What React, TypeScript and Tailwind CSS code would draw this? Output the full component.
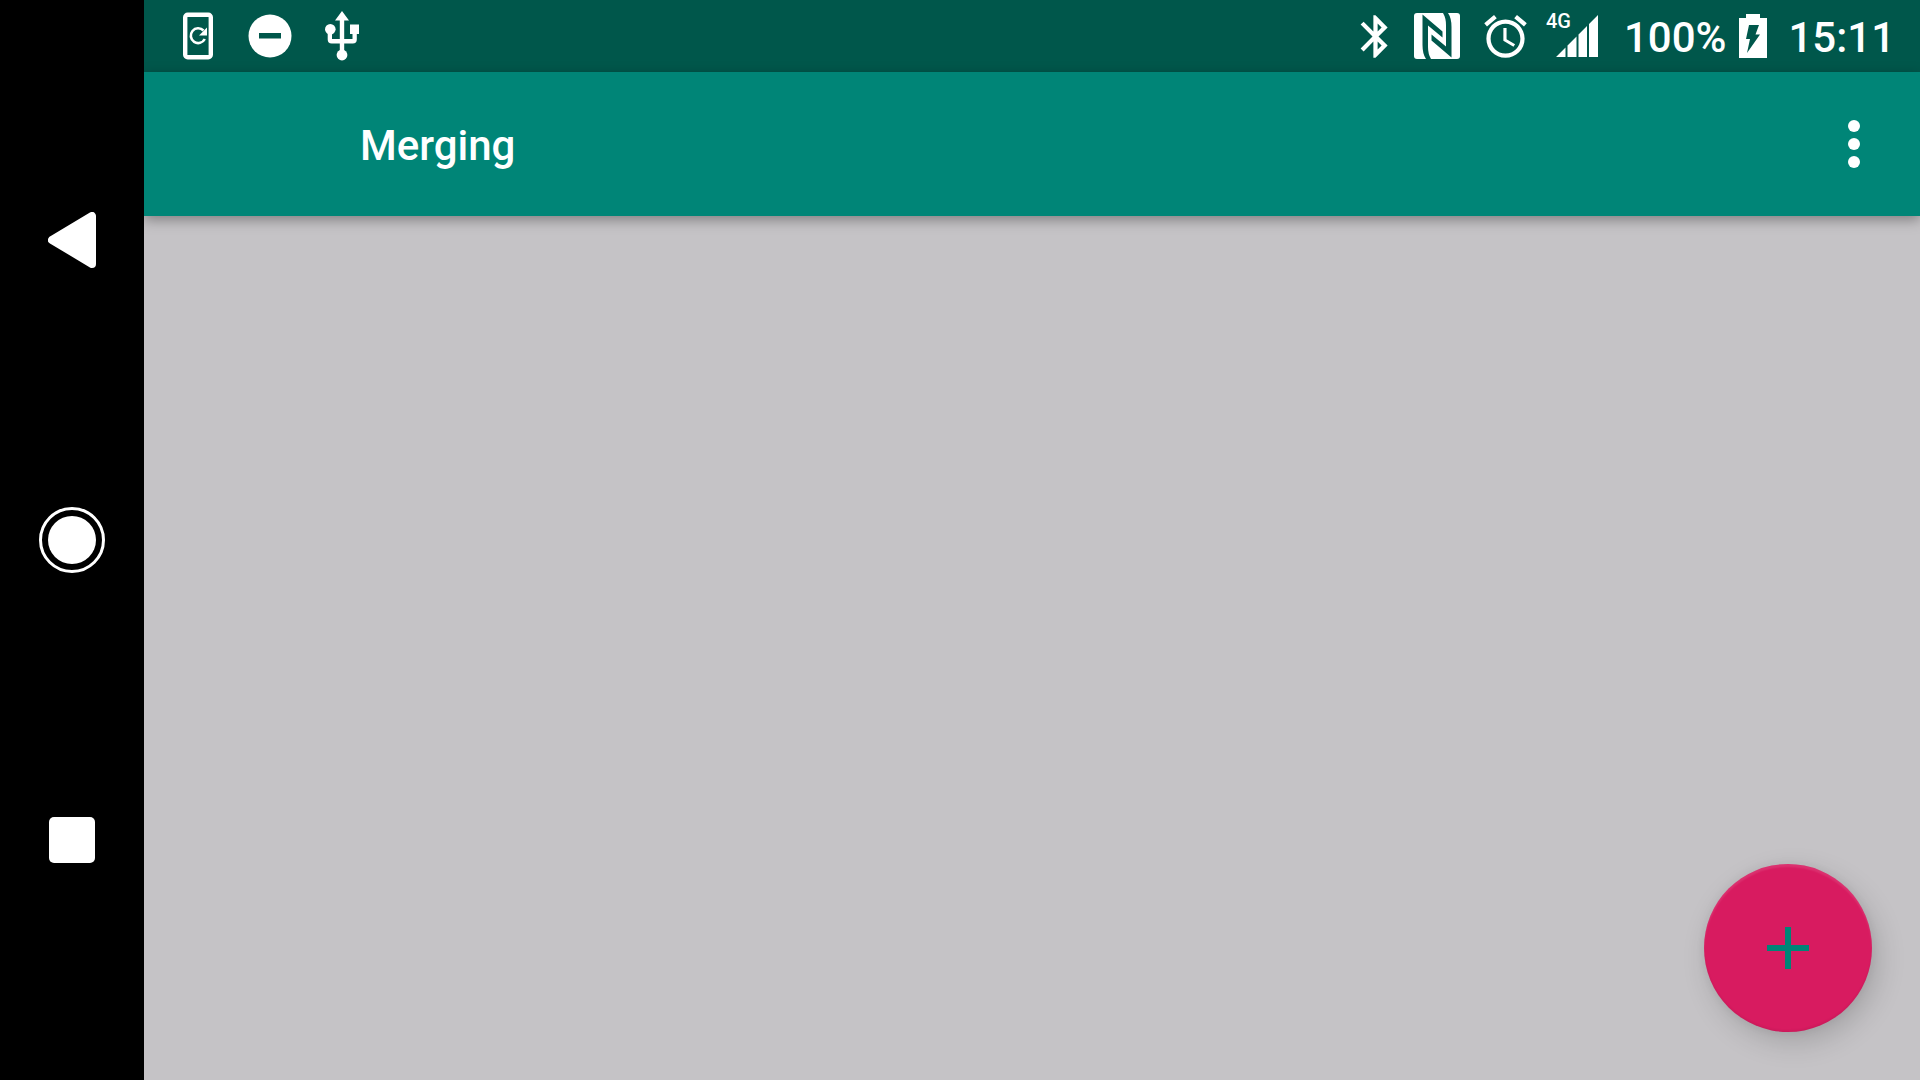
import type { ReactNode } from "react";

function Slot({ children }: { children: ReactNode }) {
  return <span className="flex w-[72px] justify-center">{children}</span>;
}

function StatusBar() {
  return (
    <header className="flex h-[72px] shrink-0 items-center justify-between bg-[#00574b] pr-[25px] pl-[18px] text-white">
      <div className="flex items-center">
        <Slot>
          <svg width="30" height="48" viewBox="0 0 30 48" fill="none" stroke="white" aria-label="Phone update">
            <rect x="2.200" y="2.700" width="25.600" height="42.600" rx="2.500" strokeWidth="4.400" />
            <path d="M20.500 18.500A7.400 7.400 0 1 0 21.800 27" strokeWidth="2.600" />
            <path d="M24 15.500v8h-8z" fill="white" stroke="none" />
          </svg>
        </Slot>
        <Slot>
          <svg width="44" height="44" viewBox="0 0 44 44" aria-label="Do not disturb">
            <circle cx="22" cy="22" r="21.500" fill="white" />
            <path d="M11 19h22v5.500H11z" fill="#00574b" />
          </svg>
        </Slot>
        <Slot>
          <svg width="34" height="50" viewBox="0 0 34 50" fill="white" aria-label="USB">
            <path d="M17 0L24 9.500H19.200V28H27.500V23H25V13.500H34V23H31.800V28.500Q31.800 32.500 27.800 32.500H19.200V40H14.800V32.500H6.700Q2.700 32.500 2.700 28.500V21H7V28H14.800V9.500H10z" />
            <circle cx="5.300" cy="18.300" r="5.300" />
            <circle cx="17" cy="44" r="5.400" />
          </svg>
        </Slot>
      </div>
      <div className="flex items-center">
        <svg width="51" height="51" viewBox="0 0 24 24" fill="white" aria-label="Bluetooth">
          <path d="M17.710 7.710L12 2h-1v7.590L6.410 5 5 6.410 10.590 12 5 17.590 6.410 19 11 14.410V22h1l5.710-5.710-4.300-4.290 4.300-4.290zM13 5.830l1.880 1.880L13 9.590V5.830zm1.880 10.460L13 18.170v-3.760l1.880 1.880z" />
        </svg>
        <svg className="ml-[13px]" width="46" height="46" viewBox="0 0 46 46" aria-label="NFC">
          <rect width="46" height="46" rx="3" fill="white" />
          <g fill="#00574b">
            <path d="M8.500 1.500L28.500 18.500V24.500L14 12.500V34Q14 41 17 46H12Q8.500 41 8.500 32z" />
            <path d="M37.500 44.500L17.500 27.500V21.500L32 33.500V12Q32 5 29 0H34Q37.500 5 37.500 14z" />
          </g>
        </svg>
        <svg className="ml-5" width="51" height="51" viewBox="0 0 24 24" fill="white" aria-label="Alarm">
          <path d="M22 5.720l-4.600-3.860-1.290 1.530 4.600 3.860L22 5.720zM7.880 3.390L6.600 1.860 2 5.710l1.290 1.530 4.590-3.850zM12.500 8H11v6l4.750 2.850.750-1.230-4-2.370V8zM12 4c-4.970 0-9 4.030-9 9s4.020 9 9 9c4.970 0 9-4.030 9-9s-4.030-9-9-9zm0 16c-3.870 0-7-3.130-7-7s3.130-7 7-7 7 3.130 7 7-3.130 7-7 7z" />
        </svg>
        <div className="relative ml-[25px]">
          <svg width="42" height="42" viewBox="0 0 42 42" fill="white" aria-label="Mobile signal">
            <path d="M0 42L9.500 32.500V42zM11.500 30.500L20.500 21.500V42H11.500zM22.500 19.500L31 11V42H22.500zM33 9L42 0V42H33z" />
          </svg>
          <span className="absolute -top-1.5 -left-2.5 text-[20px] leading-6 font-medium">4G</span>
        </div>
        <span className="ml-[26px] pt-1 text-[42px] leading-[48px] font-medium">100%</span>
        <svg className="ml-[13px]" width="28" height="44" viewBox="0 0 28 44" aria-label="Battery charging">
          <path d="M7 0h14v4h7v40H0V4h7z" fill="white" />
          <path d="M10 11h10l-3.500 9.500H21L8 39l3-14H7z" fill="#00574b" />
        </svg>
        <time className="ml-[21px] pt-1 text-[42px] leading-[48px] font-medium">15:11</time>
      </div>
    </header>
  );
}

function NavigationBar() {
  return (
    <nav className="flex w-[144px] shrink-0 flex-col bg-black py-[90px]">
      <button aria-label="Back" className="flex flex-1 items-center justify-center">
        <svg width="48" height="56" viewBox="0 0 48 56" fill="white" stroke="white" strokeWidth="8" strokeLinejoin="round">
          <path d="M4 28L44 4V52z" />
        </svg>
      </button>
      <button aria-label="Home" className="flex flex-1 items-center justify-center">
        <svg width="66" height="66" viewBox="0 0 66 66">
          <circle cx="33" cy="33" r="31.500" fill="none" stroke="white" strokeWidth="3" />
          <circle cx="33" cy="33" r="24" fill="white" />
        </svg>
      </button>
      <button aria-label="Overview" className="flex flex-1 items-center justify-center">
        <span className="size-[46px] rounded-[5px] bg-white" />
      </button>
    </nav>
  );
}

export default function App() {
  return (
    <div className="flex h-screen overflow-hidden bg-[#c5c3c6] font-[Roboto,sans-serif]">
      <NavigationBar />
      <div className="flex min-w-0 flex-1 flex-col overflow-hidden">
        <StatusBar />
        <div className="flex h-36 shrink-0 items-center justify-between bg-[#008577] pr-9 pl-[216px] text-white shadow-[0_4px_12px_rgba(0,0,0,0.34)]">
          <h1 className="pt-1 text-[42px] leading-[48px] font-medium">Merging</h1>
          <button aria-label="More options" className="flex w-[60px] flex-col items-center gap-1.5 py-6">
            <span className="size-3 rounded-full bg-white" />
            <span className="size-3 rounded-full bg-white" />
            <span className="size-3 rounded-full bg-white" />
          </button>
        </div>
        <main className="flex flex-1 items-end justify-end p-12">
          <button
            aria-label="Add"
            className="flex size-[168px] items-center justify-center rounded-full bg-[#d81b60] shadow-[6px_10px_28px_rgba(0,0,0,0.17),0_0_10px_rgba(0,0,0,0.06),inset_0_3px_2px_rgba(255,255,255,0.1),inset_0_-2px_2px_rgba(0,0,0,0.05)]"
          >
            <svg width="42" height="42" viewBox="0 0 42 42" fill="#008577">
              <path d="M18 0h6v18h18v6H24v18h-6V24H0v-6h18z" />
            </svg>
          </button>
        </main>
      </div>
    </div>
  );
}
